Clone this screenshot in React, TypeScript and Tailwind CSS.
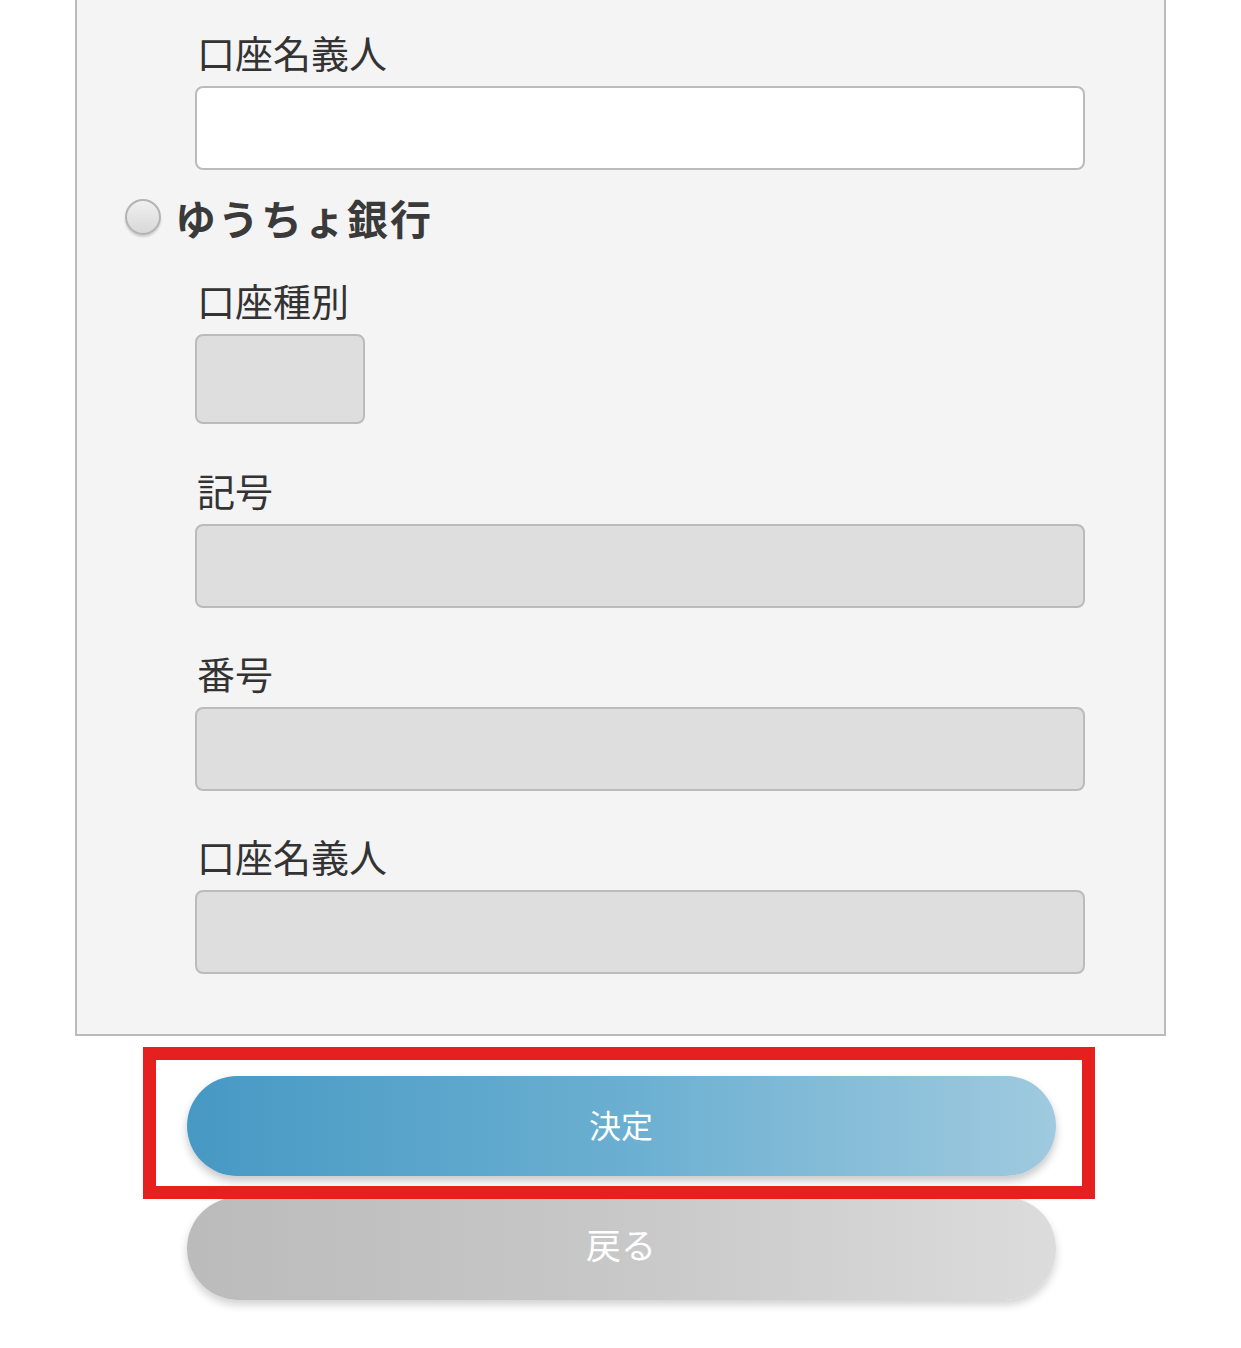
import React from 'react';

const font = { fontFamily: '"Noto Sans CJK JP", "Noto Sans", sans-serif' };

interface FieldProps {
  label: string;
  disabled?: boolean;
  short?: boolean;
  className?: string;
}

function Field({ label, disabled, short, className }: FieldProps) {
  return (
    <div className={className}>
      <div className="h-[48px] pl-[2px] text-[38px] leading-[48px] text-[#333333]">{label}</div>
      <div
        className={`mt-[10px] rounded-[8px] border-2 border-[#bbbbbb] ${
          short ? 'h-[90px] w-[170px]' : 'h-[84px] w-[890px]'
        } ${disabled ? 'bg-[#dedede]' : 'bg-white'}`}
      />
    </div>
  );
}

export default function App() {
  return (
    <div className="min-h-[1348px] w-full bg-white pb-[48px]" style={font}>
      {/* form panel (top edge is scrolled off screen) */}
      <div className="mx-auto w-[1091px] border-x-2 border-b-2 border-[#bbbbbb] bg-[#f4f4f4] pb-[60px] pt-[28px]">
        <div className="ml-[118px]">
          <Field label="口座名義人" />
        </div>

        <div className="ml-[48px] mt-[17px] flex h-[60px] items-center gap-[14px]">
          <span className="h-[36px] w-[36px] rounded-full border-2 border-[#b4b4b4] bg-gradient-to-b from-[#f0f0f0] to-[#d8d8d8] shadow-[0_2px_2px_rgba(0,0,0,0.15)]" />
          <span className="text-[41px] font-bold leading-[60px] tracking-[2px] text-[#3a3a3a]">ゆうちょ銀行</span>
        </div>

        <div className="ml-[118px]">
          <Field label="口座種別" disabled short className="mt-[29px]" />
          <Field label="記号" disabled className="mt-[42px]" />
          <Field label="番号" disabled className="mt-[41px]" />
          <Field label="口座名義人" disabled className="mt-[41px]" />
        </div>
      </div>

      <div className="mx-auto mt-[40px] w-[870px] pl-[1px]">
        <div className="relative">
          <button className="flex h-[100px] w-full items-center justify-center rounded-full bg-gradient-to-r from-[#4699c4] via-[#6aafd1] to-[#9fcadf] pb-[4px] text-[32px] text-white shadow-[0_5px_8px_rgba(0,0,0,0.22)]">
            決定
          </button>
          {/* highlight frame */}
          <div className="pointer-events-none absolute -bottom-[23px] -left-[44px] -right-[39px] -top-[29px] border-[13px] border-[#e61f1f]" />
        </div>
        <button className="mt-[21px] flex h-[103px] w-full items-center justify-center rounded-full bg-gradient-to-r from-[#bbbbbb] via-[#c8c8c8] to-[#dcdcdc] pb-[8px] text-[35px] text-white shadow-[0_5px_8px_rgba(0,0,0,0.18)]">
          戻る
        </button>
      </div>
    </div>
  );
}
